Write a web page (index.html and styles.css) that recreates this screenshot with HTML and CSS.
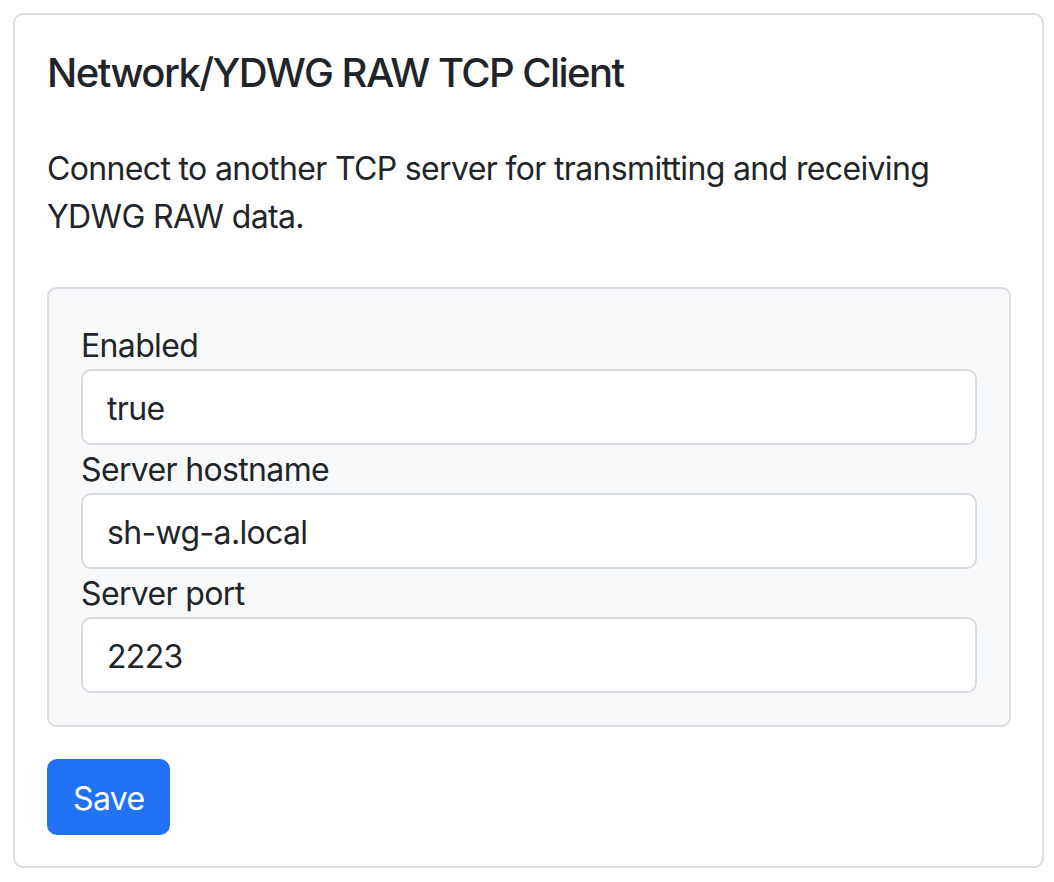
FILE: index.html
```html
<!DOCTYPE html>
<html>
<head>
<meta charset="utf-8">
<link rel="stylesheet" href="styles.css">
</head>
<body>
<div class="card">
  <h5 class="card-title">Network/YDWG RAW TCP Client</h5>
  <p class="card-text">Connect to another TCP server for transmitting and receiving YDWG RAW data.</p>
  <div class="panel">
    <label class="field-label">Enabled</label>
    <div class="field-input">true</div>
    <label class="field-label">Server hostname</label>
    <div class="field-input">sh-wg-a.local</div>
    <label class="field-label">Server port</label>
    <div class="field-input">2223</div>
  </div>
  <button class="btn-save">Save</button>
</div>
</body>
</html>
```

FILE: styles.css
```css
html, body {
  margin: 0;
  padding: 0;
  background: #ffffff;
}
body {
  padding: 13px 10px 14px 13px;
  font-family: Inter, "Liberation Sans", Arial, sans-serif;
  color: #212529;
  letter-spacing: -0.65px;
}
.card {
  border: 2px solid #dcdcdd;
  border-radius: 10px;
  padding: 32px 31px 30px 32px;
  display: flex;
  flex-direction: column;
  align-items: flex-start;
  height: 855px;
  box-sizing: border-box;
}
.card-title {
  margin: 0 0 46px 0;
  padding-top: 2px;
  font-size: 40px;
  line-height: 48px;
  font-weight: 500;
  letter-spacing: -1.55px;
}
.card-text {
  margin: 0 0 46px 0;
  padding-top: 2px;
  font-size: 32px;
  line-height: 48px;
  font-weight: 400;
}
.panel {
  align-self: stretch;
  background: #f8f9fa;
  border: 2px solid #dcdee1;
  border-radius: 9px;
  padding: 32px 32px 32px 32px;
  display: flex;
  flex-direction: column;
}
.field-label {
  padding-top: 2px;
  font-size: 32px;
  line-height: 46px;
}
.field-input {
  background: #ffffff;
  border: 2px solid #d8dbdf;
  border-radius: 10px;
  padding: 14px 24px 10px;
  font-size: 32px;
  line-height: 48px;
}
.btn-save {
  margin-top: 32px;
  background: #2272f6;
  color: #ffffff;
  border: 2px solid #2272f6;
  border-radius: 10px;
  padding: 14px 24px 10px;
  font-family: inherit;
  font-size: 32px;
  line-height: 48px;
  letter-spacing: -0.65px;
}
```
